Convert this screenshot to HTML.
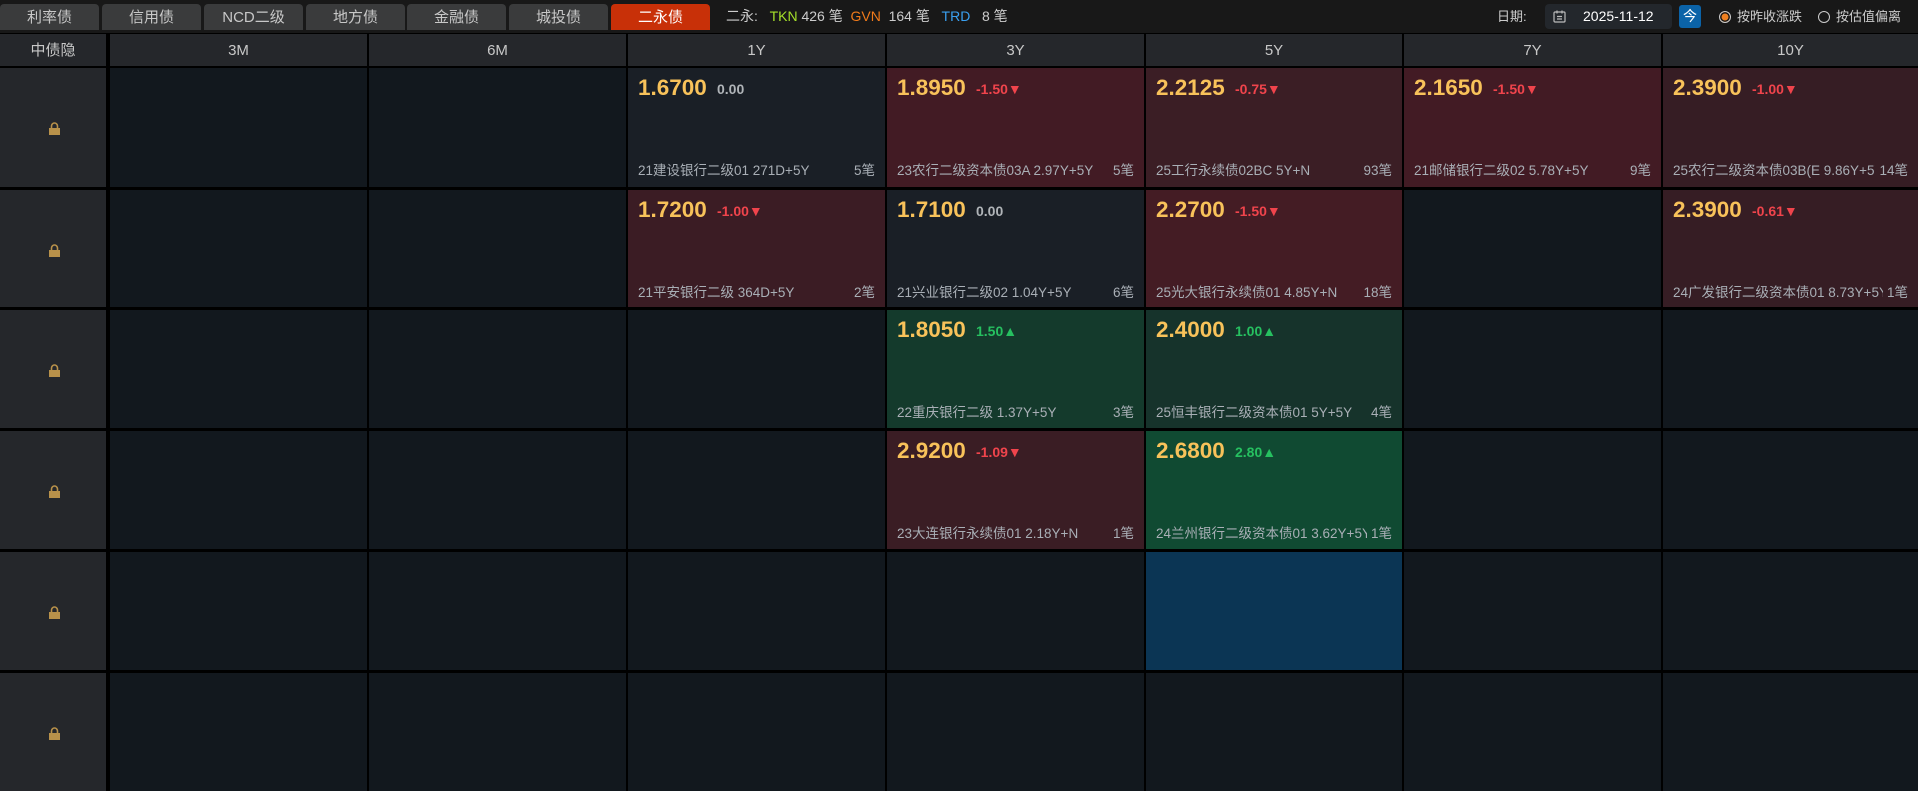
<!DOCTYPE html>
<html><head><meta charset="utf-8"><style>
*{margin:0;padding:0;box-sizing:border-box}
body{width:1918px;height:791px;background:#000;font-family:"Liberation Sans","Noto Sans CJK SC",sans-serif;overflow:hidden;position:relative;color:#bbb}
.top{position:absolute;left:0;top:0;width:1918px;height:33px;background:#181818}
.tab{position:absolute;top:4px;height:26px;width:99px;background:#3a3b3c;border-radius:4px 4px 0 0;color:#c8c8c8;font-size:15px;text-align:center;line-height:27px}
.tab.on{background:#c83008;color:#fff}
.info{position:absolute;top:0;line-height:33px;font-size:14px;color:#ccc}
.c{position:absolute;background:#12181e}
.h{background:#25272b;color:#c8c8c8;font-size:15px;text-align:center;line-height:33px}
.lock{position:absolute;left:49px;top:54px;width:11px;height:13px}
.p{position:absolute;left:10px;top:7px;font-size:22.5px;font-weight:bold;color:#f8c25a}
.d{position:absolute;left:89px;top:13px;font-size:14px;font-weight:bold}
.n{position:absolute;left:10px;right:10px;top:91px;font-size:13.5px;color:#a9afb6;white-space:nowrap;display:flex}
.n b{font-weight:normal;flex:1;overflow:hidden;min-width:0}
.n span{flex:none;margin-left:4px}
.r{color:#f0444c}.gr{color:#26c060}.z{color:#b0b4b8}
</style></head><body>
<div class="top">
<div class="tab" style="left:0">利率债</div>
<div class="tab" style="left:102px">信用债</div>
<div class="tab" style="left:204px">NCD二级</div>
<div class="tab" style="left:306px">地方债</div>
<div class="tab" style="left:407px">金融债</div>
<div class="tab" style="left:509px">城投债</div>
<div class="tab on" style="left:611px">二永债</div>
<div class="info" style="left:726px">二永:&nbsp;&nbsp;&nbsp;<span style="color:#a5e02a">TKN</span> 426 笔&nbsp;&nbsp;<span style="color:#f07a1a">GVN</span>&nbsp;&nbsp;164 笔&nbsp;&nbsp;&nbsp;<span style="color:#3aa0f0">TRD</span>&nbsp;&nbsp;&nbsp;8 笔</div>
<div class="info" style="left:1497px;font-size:13px">日期:</div>
<div style="position:absolute;left:1545px;top:4px;width:127px;height:25px;background:#23272c;border-radius:4px;color:#fff;font-size:14px;line-height:25px;padding-left:38px">2025-11-12
<svg style="position:absolute;left:8px;top:6px" width="13" height="13" viewBox="0 0 13 13" fill="none" stroke="#bbb" stroke-width="1.2"><rect x="1" y="2" width="11" height="10" rx="1"/><path d="M4 0.5v3M9 0.5v3M4 6.5h5M4 9h5"/></svg></div>
<div style="position:absolute;left:1679px;top:5px;width:22px;height:23px;background:#0b63a8;border-radius:3px;color:#fff;font-size:14px;text-align:center;line-height:23px">今</div>
<div style="position:absolute;left:1719px;top:11px;width:12px;height:12px;border-radius:50%;border:1.5px solid #ccc;background:#f08020;box-shadow:inset 0 0 0 1.5px #181818"></div>
<div class="info" style="left:1737px;font-size:13px">按昨收涨跌</div>
<div style="position:absolute;left:1818px;top:11px;width:12px;height:12px;border-radius:50%;border:1.5px solid #ccc"></div>
<div class="info" style="left:1836px;font-size:13px">按估值偏离</div>
</div>
<div id="grid"></div>
<script>
const xs=[0,108,367,626,885,1144,1402,1661,1918];
const ys=[33,67,188,308,429,550,671,792];
const hd=["中债隐","3M","6M","1Y","3Y","5Y","7Y","10Y"];
const cells={
"0,3":["#1a1f26","1.6700","0.00","z","21建设银行二级01 271D+5Y","5笔"],
"0,4":["#421b24","1.8950","-1.50▼","r","23农行二级资本债03A 2.97Y+5Y","5笔"],
"0,5":["#3b1e25","2.2125","-0.75▼","r","25工行永续债02BC 5Y+N","93笔"],
"0,6":["#421b24","2.1650","-1.50▼","r","21邮储银行二级02 5.78Y+5Y","9笔"],
"0,7":["#361d24","2.3900","-1.00▼","r","25农行二级资本债03B(E 9.86Y+5Y","14笔"],
"1,3":["#3b1c24","1.7200","-1.00▼","r","21平安银行二级 364D+5Y","2笔"],
"1,4":["#1a1f26","1.7100","0.00","z","21兴业银行二级02 1.04Y+5Y","6笔"],
"1,5":["#441c24","2.2700","-1.50▼","r","25光大银行永续债01 4.85Y+N","18笔"],
"1,7":["#361d24","2.3900","-0.61▼","r","24广发银行二级资本债01 8.73Y+5Y","1笔"],
"2,4":["#143a2c","1.8050","1.50▲","gr","22重庆银行二级 1.37Y+5Y","3笔"],
"2,5":["#16332b","2.4000","1.00▲","gr","25恒丰银行二级资本债01 5Y+5Y","4笔"],
"3,4":["#3a1d24","2.9200","-1.09▼","r","23大连银行永续债01 2.18Y+N","1笔"],
"3,5":["#104a32","2.6800","2.80▲","gr","24兰州银行二级资本债01 3.62Y+5Y","1笔"],
"4,5":["#0b3554",null]};
let h='';
for(let c=0;c<8;c++){h+=`<div class="c h" style="left:${xs[c]+(c?2:0)}px;top:${ys[0]+1}px;width:${xs[c+1]-xs[c]-2}px;height:${ys[1]-ys[0]-2}px">${hd[c]}</div>`;}
for(let r=0;r<6;r++)for(let c=0;c<8;c++){
 const L=xs[c]+(c?2:0),T=ys[r+1]+(r?2:1),W=xs[c+1]-xs[c]-2,H=ys[r+2]-ys[r+1]-(r?2:1)-1;
 let bg='#12181e',inner='';
 if(c==0){bg='#25272b';inner='<svg class="lock" viewBox="0 0 11 13"><path d="M2.5 6V4a3 3 0 0 1 6 0v2" fill="none" stroke="#b8914a" stroke-width="1.6"/><rect x="0" y="6" width="11" height="7" fill="#b8914a"/></svg>';}
 const k=cells[r+","+c];
 if(k){bg=k[0];if(k[1])inner=`<div class="p">${k[1]}</div><div class="d ${k[3]}">${k[2]}</div><div class="n"><b>${k[4]}</b><span>${k[5]}</span></div>`;}
 h+=`<div class="c" style="left:${L}px;top:${T}px;width:${W}px;height:${H}px;background:${bg}">${inner}</div>`;
}
document.getElementById('grid').innerHTML=h;
</script>
</body></html>
